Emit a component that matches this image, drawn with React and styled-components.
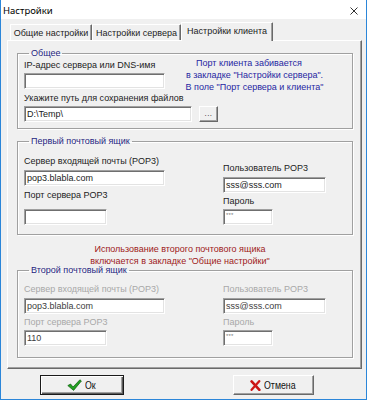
import React from 'react';
import styled, { createGlobalStyle, css } from 'styled-components';

const Global = createGlobalStyle`
  html, body { margin: 0; padding: 0; background: #f0f0f0; }
  #root { width: 367px; height: 400px; }
  *, *::before, *::after { box-sizing: border-box; }
`;

const Window = styled.div`
  width: 367px;
  height: 400px;
  display: flex;
  flex-direction: column;
  background: #f0f0f0;
  border: 1px solid #2b86d9;
  border-top: none;
  font-family: "Liberation Sans", Arial, sans-serif;
  font-size: 9px;
  color: #1c1c1c;
  overflow: hidden;
`;

const TitleBar = styled.div`
  height: 19px;
  flex: none;
  background: #fff;
  display: flex;
  align-items: center;
  justify-content: space-between;
  padding: 2px 8px 0 2px;
`;

const TitleText = styled.span`
  font-family: "Noto Sans", "Open Sans", sans-serif;
  font-size: 9.5px;
  color: #000;
`;

const Body = styled.div`
  flex: 1;
  display: flex;
  flex-direction: column;
  padding: 3px 4px 0 6px;
`;

const TabStrip = styled.div`
  display: flex;
  align-items: flex-end;
  padding-left: 3px;
  height: 18px;
`;

const Tab = styled.div`
  width: ${p => p.$w}px;
  height: 16px;
  display: flex;
  align-items: center;
  justify-content: center;
  background: #f0f0f0;
  border-left: 1px solid #fff;
  border-top: 1px solid #fff;
  border-right: 1px solid #696969;
  box-shadow: inset -1px 0 0 #a0a0a0;
  border-radius: 1px 1px 0 0;
  white-space: nowrap;
  ${p => p.$active && css`
    height: 19px;
    margin-bottom: -1px;
    padding-bottom: 3px;
    position: relative;
    z-index: 1;
  `}
`;

const Panel = styled.div`
  height: 329px;
  flex: none;
  display: flex;
  flex-direction: column;
  border-left: 1px solid #fff;
  border-top: 1px solid #fff;
  border-right: 1px solid #696969;
  border-bottom: 1px solid #696969;
  box-shadow: inset -1px -1px 0 #a0a0a0;
  padding: 0 8px 0 9px;
`;

const Group = styled.fieldset`
  margin: ${p => p.$mt}px 0 0 0;
  padding: 0 0 ${p => p.$pb}px 6px;
  border: 1px solid #a0a0a0;
  box-shadow: 1px 1px 0 #fff, inset 1px 1px 0 #fff;
  min-width: 0;
`;

const Legend = styled.legend`
  margin-left: 5px;
  padding: 0 2px;
  line-height: 10px;
  height: 10px;
  color: #262680;
`;

const Row = styled.div`
  display: flex;
  align-items: flex-start;
  margin-top: ${p => p.$mt || 0}px;
`;

const Col = styled.div`
  display: flex;
  flex-direction: column;
  width: ${p => (p.$w ? `${p.$w}px` : 'auto')};
  flex: ${p => (p.$w ? 'none' : '1')};
`;

const Label = styled.div`
  line-height: 11px;
  height: 11px;
  margin-top: ${p => p.$mt || 0}px;
  color: ${p => (p.$disabled ? '#a8a8a8' : '#1c1c1c')};
  white-space: nowrap;
`;

const Edit = styled.div`
  width: ${p => p.$w}px;
  height: 16px;
  margin-top: ${p => p.$mt || 0}px;
  background: #fff;
  border-style: solid;
  border-width: 1px;
  border-color: #a0a0a0 #fff #fff #a0a0a0;
  box-shadow: inset 1px 1px 0 #6f6f6f, inset -1px -1px 0 #e3e3e3;
  padding: 0 2px;
  display: flex;
  align-items: center;
  white-space: nowrap;
  overflow: hidden;
  color: ${p => (p.$disabled ? '#3c3c3c' : '#1a1a1a')};
  ${p => p.$tiny && css`
    align-items: flex-start;
    padding-top: 2px;
    font-size: 6px;
    line-height: 6px;
    color: #7a7a7a;
    letter-spacing: 0.2px;
  `}
`;

const Note = styled.div`
  flex: 1;
  margin: -1px 0 -4px 0;
  padding-right: 8px;
  line-height: 12px;
  text-align: center;
  color: #2626a2;
`;

const Line = styled.span`
  display: block;
  white-space: nowrap;
  padding-right: ${p => p.$pr || 0}px;
`;

const RedNote = styled.div`
  margin: 8px 0 -2px 0;
  padding-right: 10px;
  line-height: 12px;
  text-align: center;
  color: #9e1a1a;
`;

const SmallButton = styled.div`
  width: 19px;
  height: 16px;
  margin-left: 7px;
  background: #f0f0f0;
  border-style: solid;
  border-width: 1px;
  border-color: #fff #696969 #696969 #fff;
  box-shadow: inset -1px -1px 0 #a0a0a0;
  display: flex;
  align-items: flex-end;
  justify-content: center;
  padding-bottom: 3px;
  font-size: 8px;
  line-height: 8px;
  letter-spacing: 0.5px;
`;

const ButtonRow = styled.div`
  display: flex;
  gap: 109px;
  padding-left: 33px;
  margin-top: 6px;
`;

const Button = styled.div`
  width: ${p => p.$w}px;
  height: 20px;
  background: #f0f0f0;
  display: flex;
  align-items: center;
  justify-content: center;
  gap: 3px;
  color: #111;
  border-style: solid;
  border-width: 1px;
  ${p => p.$default
    ? css`
      border-color: #1a1a1a;
      box-shadow: inset 1px 1px 0 #fff, inset -1px -1px 0 #5a5a5a, inset -2px -2px 0 #a0a0a0;
    `
    : css`
      border-color: #fff #696969 #696969 #fff;
      box-shadow: inset -1px -1px 0 #a0a0a0;
    `}
`;

const Caption = styled.span`
  display: inline-block;
  font-family: "Liberation Sans", Arial, sans-serif;
  font-size: 11px;
  line-height: 12px;
  transform: scaleX(0.8);
  transform-origin: left center;
  width: ${p => p.$w}px;
  white-space: nowrap;
`;

const CloseIcon = () => (
  <svg width="8" height="8" viewBox="0 0 8 8">
    <path d="M0.5 0.5 L7.5 7.5 M7.5 0.5 L0.5 7.5" stroke="#1b1b1b" strokeWidth="0.9" fill="none" />
  </svg>
);

const CheckIcon = () => (
  <svg width="15" height="12" viewBox="0 0 15 12">
    <path
      d="M0.8 6.6 L3.6 5.0 L6.0 8.0 L12.9 0.8 L14.4 2.0 L6.6 11.4 Z"
      fill="#22a022"
      stroke="#0d5f0d"
      strokeWidth="0.7"
      strokeLinejoin="round"
    />
  </svg>
);

const CrossIcon = () => (
  <svg width="11" height="11" viewBox="0 0 11 11">
    <path d="M1.6 1.4 L9.4 9.8" stroke="#c81414" strokeWidth="2.6" strokeLinecap="round" />
    <path d="M9.2 1.2 L1.6 9.8" stroke="#d01818" strokeWidth="2.3" strokeLinecap="round" />
  </svg>
);

export default function App() {
  return (
    <>
      <Global />
      <Window>
        <TitleBar>
          <TitleText>Настройки</TitleText>
          <CloseIcon />
        </TitleBar>
        <Body>
          <TabStrip>
            <Tab $w={82}>Общие настройки</Tab>
            <Tab $w={89}>Настройки сервера</Tab>
            <Tab $w={92} $active>Настройки клиента</Tab>
          </TabStrip>
          <Panel>
            <Group $mt={7} $pb={6}>
              <Legend>Общее</Legend>
              <Row>
                <Col $w={141}>
                  <Label $mt={2}>IP-адрес сервера или DNS-имя</Label>
                  <Edit $w={141} $mt={2} />
                </Col>
                <Note>
                  <Line $pr={11}>Порт клиента забивается</Line>
                  <Line>в закладке "Настройки сервера".</Line>
                  <Line>В поле "Порт сервера и клиента"</Line>
                </Note>
              </Row>
              <Label $mt={4}>Укажите путь для сохранения файлов</Label>
              <Row $mt={2}>
                <Edit $w={168}>D:\Temp\</Edit>
                <SmallButton>...</SmallButton>
              </Row>
            </Group>

            <Group $mt={7} $pb={9}>
              <Legend>Первый почтовый ящик</Legend>
              <Row>
                <Col $w={199}>
                  <Label $mt={10}>Сервер входящей почты (POP3)</Label>
                  <Edit $w={141} $mt={3}>pop3.blabla.com</Edit>
                  <Label $mt={4}>Порт сервера POP3</Label>
                  <Edit $w={83} $mt={8} />
                </Col>
                <Col>
                  <Label $mt={17}>Пользователь POP3</Label>
                  <Edit $w={103} $mt={3}>sss@sss.com</Edit>
                  <Label $mt={3}>Пароль</Label>
                  <Edit $w={50} $mt={2} $tiny>***</Edit>
                </Col>
              </Row>
            </Group>

            <RedNote>
              <Line>Использование второго почтового ящика</Line>
              <Line>включается в закладке "Общие настройки"</Line>
            </RedNote>

            <Group $mt={0} $pb={11}>
              <Legend>Второй почтовый ящик</Legend>
              <Row>
                <Col $w={199}>
                  <Label $mt={9} $disabled>Сервер входящей почты (POP3)</Label>
                  <Edit $w={141} $mt={3} $disabled>pop3.blabla.com</Edit>
                  <Label $mt={3} $disabled>Порт сервера POP3</Label>
                  <Edit $w={83} $mt={2} $disabled>110</Edit>
                </Col>
                <Col>
                  <Label $mt={9} $disabled>Пользователь POP3</Label>
                  <Edit $w={103} $mt={3} $disabled>sss@sss.com</Edit>
                  <Label $mt={3} $disabled>Пароль</Label>
                  <Edit $w={50} $mt={2} $tiny>***</Edit>
                </Col>
              </Row>
            </Group>
          </Panel>
          <ButtonRow>
            <Button $w={84} $default>
              <CheckIcon />
              <Caption $w={12}>Ок</Caption>
            </Button>
            <Button $w={81}>
              <CrossIcon />
              <Caption $w={33}>Отмена</Caption>
            </Button>
          </ButtonRow>
        </Body>
      </Window>
    </>
  );
}
